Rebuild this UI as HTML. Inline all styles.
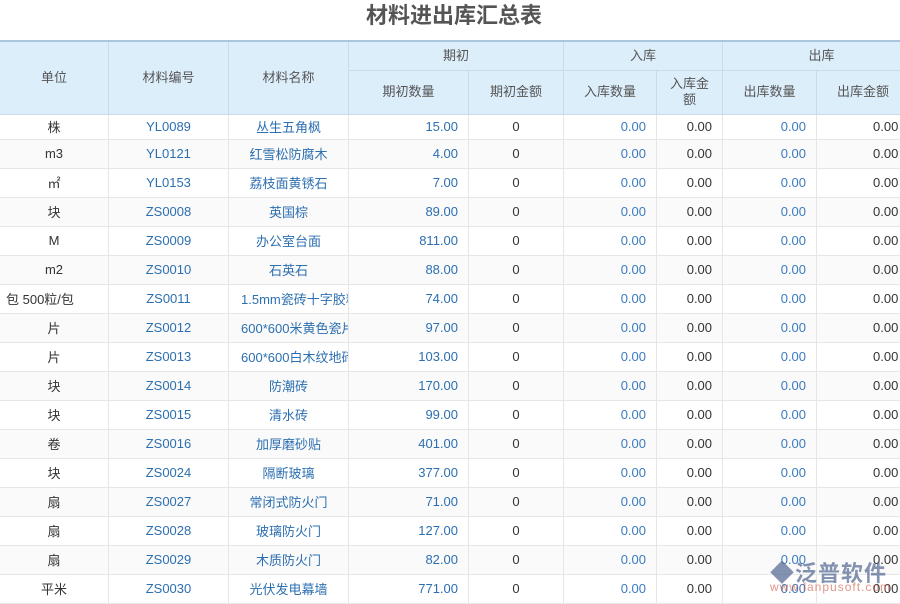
<!DOCTYPE html>
<html><head><meta charset="utf-8"><style>
body{margin:0;width:900px;height:600px;overflow:hidden;background:#fff;font-family:"Liberation Sans","Noto Sans CJK SC",sans-serif;font-size:13px;color:#333;position:relative}
.t{position:absolute;top:3px;left:4px;width:900px;text-align:center;font-size:22px;font-weight:bold;color:#555;line-height:26px}
table{position:absolute;top:40px;left:-1px;border-collapse:collapse;table-layout:fixed;width:921px}
th{background:#ddeefb;font-weight:normal;color:#555;border:1px solid #c9dcec;line-height:16px}
td{border:1px solid #e6e6e6;height:28px;padding:0;white-space:nowrap;overflow:hidden;text-align:center}
tr.f td{height:24px}
tr:nth-child(even) td{background:#fafafa}
.b{color:#2c6fb0}.r{text-align:right;padding-right:10px}.lb{color:#3a7bc0}
.n{text-align:left;padding-left:12px}
</style></head><body>
<div class="t">材料进出库汇总表</div>
<table>
<colgroup><col style="width:109px"><col style="width:120px"><col style="width:120px"><col style="width:120px"><col style="width:95px"><col style="width:93px"><col style="width:66px"><col style="width:94px"><col style="width:104px"></colgroup>
<thead>
<tr style="height:29px;border-top:2px solid #a9c6dc"><th rowspan="2">单位</th><th rowspan="2">材料编号</th><th rowspan="2">材料名称</th><th colspan="2">期初</th><th colspan="2">入库</th><th colspan="2">出库</th></tr>
<tr style="height:44px"><th>期初数量</th><th>期初金额</th><th>入库数量</th><th>入库金<br>额</th><th>出库数量</th><th style="text-align:left;padding-left:20px">出库金额</th></tr>
</thead>
<tbody id="b"></tbody>
</table>
<div style="position:absolute;left:770px;top:553px;font-size:24px;font-weight:bold;color:rgba(90,110,150,0.75);letter-spacing:1px">◆<span style="font-size:22px">泛普软件</span></div>
<div style="position:absolute;left:770px;top:580px;font-size:12px;color:rgba(200,80,60,0.6);letter-spacing:1px">www.fanpusoft.com</div>
<script>
var d=[["株","YL0089","丛生五角枫","15.00"],["m3","YL0121","红雪松防腐木","4.00"],["㎡","YL0153","荔枝面黄锈石","7.00"],["块","ZS0008","英国棕","89.00"],["M","ZS0009","办公室台面","811.00"],["m2","ZS0010","石英石","88.00"],["包 500粒/包","ZS0011","1.5mm瓷砖十字胶粒","74.00"],["片","ZS0012","600*600米黄色瓷片","97.00"],["片","ZS0013","600*600白木纹地砖","103.00"],["块","ZS0014","防潮砖","170.00"],["块","ZS0015","清水砖","99.00"],["卷","ZS0016","加厚磨砂贴","401.00"],["块","ZS0024","隔断玻璃","377.00"],["扇","ZS0027","常闭式防火门","71.00"],["扇","ZS0028","玻璃防火门","127.00"],["扇","ZS0029","木质防火门","82.00"],["平米","ZS0030","光伏发电幕墙","771.00"]];
var h="";d.forEach(function(r,i){var long=r[2].length>8;h+='<tr'+(i==0?' class="f"':'')+'><td'+(r[0].length>3?' class="n" style="padding-left:6px"':'')+'>'+r[0]+'</td><td class="b">'+r[1]+'</td><td class="b'+(long?' n':'')+'">'+r[2]+'</td><td class="r b">'+r[3]+'</td><td>0</td><td class="r lb">0.00</td><td class="r">0.00</td><td class="r lb">0.00</td><td style="text-align:left;padding-left:56px">0.00</td></tr>'});
document.getElementById("b").innerHTML=h;
</script>
</body></html>
